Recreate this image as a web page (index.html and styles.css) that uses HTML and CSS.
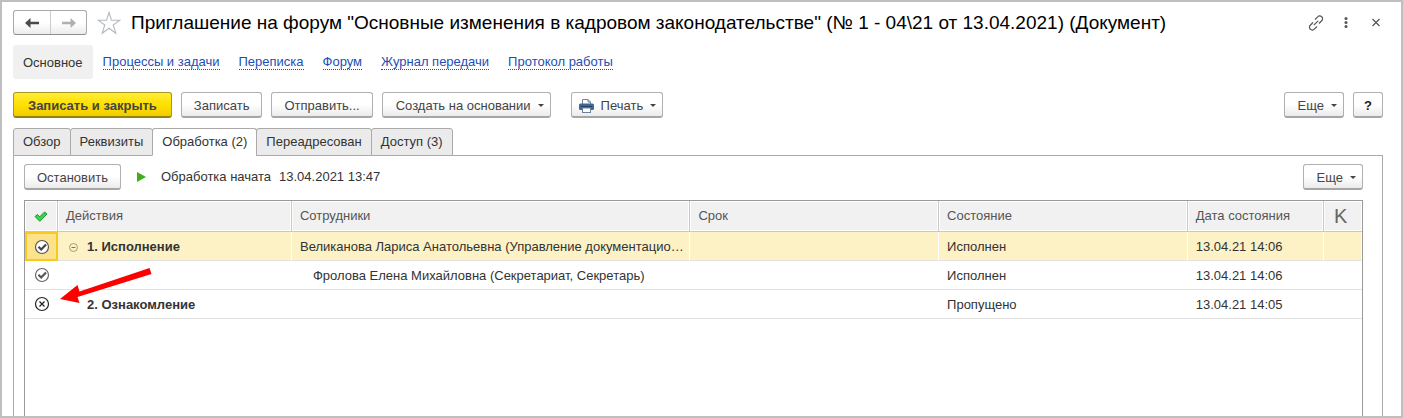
FILE: index.html
```html
<!DOCTYPE html>
<html lang="ru">
<head>
<meta charset="utf-8">
<title>Приглашение на форум (Документ)</title>
<link rel="stylesheet" href="styles.css">
</head>
<body>
<main class="window">
  <header class="titlebar">
    <div class="history">
      <button type="button" class="history-btn" aria-label="Назад"><svg width="14" height="10" viewBox="0 0 14 10"><path d="M0 5 5.500 0V3.700H14V6.300H5.500V10Z" fill="#4a4a4a"/></svg></button>
      <button type="button" class="history-btn" aria-label="Вперед"><svg width="14" height="10" viewBox="0 0 14 10"><path d="M14 5 8.500 0V3.700H0V6.300H8.500V10Z" fill="#b0b0b0"/></svg></button>
    </div>
    <button type="button" class="icon-btn star" aria-label="В избранное"><svg width="24" height="24" viewBox="0 0 24 24"><path d="M12 1.500 14.500 9.300H22.800L16.200 14 18.800 22.200 12 17.200 5.200 22.200 7.800 14 1.200 9.300H9.500Z" fill="#fff" stroke="#b4b8be" stroke-width="1.100"/></svg></button>
    <h1 class="title">Приглашение на форум "Основные изменения в кадровом законодательстве" (№ 1 - 04\21 от 13.04.2021) (Документ)</h1>
    <div class="window-tools">
      <button type="button" class="icon-btn" aria-label="Ссылка"><svg width="18" height="18" viewBox="0 0 18 18" fill="none" stroke="#555" stroke-width="1.200"><path d="M8 5.500 10.700 2.800a2.700 2.700 0 0 1 4 0 2.700 2.700 0 0 1 0 4L12 9.500M10 12.500 7.300 15.200a2.700 2.700 0 0 1-4 0 2.700 2.700 0 0 1 0-4L6 8.500M6.800 11.200 11.200 6.800"/></svg></button>
      <button type="button" class="icon-btn" aria-label="Меню"><svg width="18" height="18" viewBox="0 0 18 18" fill="#555"><circle cx="9" cy="4.500" r="1.500"/><circle cx="9" cy="8.500" r="1.500"/><circle cx="9" cy="12.500" r="1.500"/></svg></button>
      <button type="button" class="icon-btn" aria-label="Закрыть"><svg width="18" height="18" viewBox="0 0 18 18"><path d="M5.500 5 12.500 12M12.500 5 5.500 12" stroke="#555" stroke-width="1.200"/></svg></button>
    </div>
  </header>

  <nav class="sections">
    <span class="section-current">Основное</span>
    <a class="section-link" href="#">Процессы и задачи</a>
    <a class="section-link" href="#">Переписка</a>
    <a class="section-link" href="#">Форум</a>
    <a class="section-link" href="#">Журнал передачи</a>
    <a class="section-link" href="#">Протокол работы</a>
  </nav>

  <div class="toolbar">
    <button type="button" class="btn btn-primary">Записать и закрыть</button>
    <button type="button" class="btn">Записать</button>
    <button type="button" class="btn">Отправить...</button>
    <button type="button" class="btn btn-menu">Создать на основании<span class="caret"></span></button>
    <button type="button" class="btn btn-menu btn-print"><svg width="15" height="14" viewBox="0 0 15 14"><path d="M3.500 5V.5H9L11.500 3V5" fill="#fff" stroke="#6d8299"/><path d="M9 .5V3H11.500" fill="none" stroke="#6d8299"/><rect y="4.500" width="15" height="6.500" rx="1.500" fill="#3d6894"/><path d="M2 7.500H13" stroke="#1f4166"/><rect x="3.500" y="9" width="8" height="4.500" fill="#fff" stroke="#6d8299"/></svg>Печать<span class="caret"></span></button>
    <span class="spacer"></span>
    <button type="button" class="btn btn-menu">Еще<span class="caret"></span></button>
    <button type="button" class="btn btn-help">?</button>
  </div>

  <div class="tabs" role="tablist">
    <button type="button" class="tab" role="tab">Обзор</button>
    <button type="button" class="tab" role="tab">Реквизиты</button>
    <button type="button" class="tab tab-active" role="tab" aria-selected="true">Обработка (2)</button>
    <button type="button" class="tab" role="tab">Переадресован</button>
    <button type="button" class="tab" role="tab">Доступ (3)</button>
  </div>

  <section class="panel">
    <div class="panel-bar">
      <button type="button" class="btn">Остановить</button>
      <svg class="play" width="9" height="10" viewBox="0 0 9 10"><path d="M0 0 9 5 0 10Z" fill="#3fae1c"/></svg>
      <span>Обработка начата</span>
      <time class="started">13.04.2021 13:47</time>
      <span class="spacer"></span>
      <button type="button" class="btn btn-menu">Еще<span class="caret"></span></button>
    </div>
    <div class="grid-box">
      <table class="grid">
        <colgroup><col class="col-mark"><col class="col-action"><col class="col-staff"><col class="col-mid"><col class="col-mid"><col><col class="col-k"></colgroup>
        <thead>
          <tr>
            <th class="mark" aria-label="Отметка"><svg width="14" height="11" viewBox="0 0 14 11"><path d="M1 5.500 3.500 3.500 5.800 5.800 10.500 1 13 3 5.800 10.300Z" fill="#3fd04c" stroke="#169a2b"/></svg></th>
            <th>Действия</th><th>Сотрудники</th><th>Срок</th><th>Состояние</th><th>Дата состояния</th><th class="control">K</th>
          </tr>
        </thead>
        <tbody>
          <tr class="selected">
            <td class="mark mark-focus"><svg width="16" height="16" viewBox="0 0 16 16"><circle cx="8" cy="8" r="6.500" fill="#fff" stroke="#555" stroke-width="1.200"/><path d="M4.500 7.800 7.200 10.500 12 5.500" fill="none" stroke="#444" stroke-width="2.200"/></svg></td>
            <td class="action"><span class="step"><svg width="9" height="9" viewBox="0 0 9 9"><circle cx="4.500" cy="4.500" r="4" fill="none" stroke="#a39a78"/><path d="M2.500 4.500H6.500" stroke="#7d7658"/></svg>1. Исполнение</span></td>
            <td>Великанова Лариса Анатольевна (Управление документацио…</td><td></td><td>Исполнен</td><td>13.04.21 14:06</td><td></td>
          </tr>
          <tr>
            <td class="mark"><svg width="16" height="16" viewBox="0 0 16 16"><circle cx="8" cy="8" r="6.500" fill="#fff" stroke="#666" stroke-width="1.200"/><path d="M4.500 7.800 7.200 10.500 12 5.500" fill="none" stroke="#555" stroke-width="2.200"/></svg></td>
            <td></td><td class="nested">Фролова Елена Михайловна (Секретариат, Секретарь)</td><td></td><td>Исполнен</td><td>13.04.21 14:06</td><td></td>
          </tr>
          <tr>
            <td class="mark"><svg width="16" height="16" viewBox="0 0 16 16" fill="none" stroke="#222"><circle cx="8" cy="8" r="6.500" stroke-width="1.200"/><path d="M5.500 5.500 10.500 10.500M10.500 5.500 5.500 10.500" stroke-width="1.300"/></svg></td>
            <td class="action action-leaf">2. Ознакомление</td><td></td><td></td><td>Пропущено</td><td>13.04.21 14:05</td><td></td>
          </tr>
        </tbody>
      </table>
      <svg class="pointer" width="92" height="36" viewBox="0 0 92 36"><path d="M0 32 17.500 18 19.500 24.500 89.500 1 91.500 7 17.500 30 19.500 36Z" fill="#fe0000"/></svg>
    </div>
  </section>
</main>
</body>
</html>
```
FILE: styles.css
```css
* {
  box-sizing: border-box;
}

body {
  margin: 0;
  font: 13px/16px "Liberation Sans", Arial, sans-serif;
  color: #333;
  background: #fff;
}

button {
  font: inherit;
  color: inherit;
}

svg {
  display: block;
  flex: none;
}

.window {
  display: flex;
  flex-direction: column;
  min-height: 100vh;
  border: 2px solid #bfbfbf;
  padding: 8px 18px 0 11px;
}

.titlebar {
  display: flex;
  align-items: center;
  height: 25px;
}

.history {
  display: flex;
  height: 25px;
  border: 1px solid #aaa;
  border-bottom-color: #8e8e8e;
  border-radius: 3px;
  background: linear-gradient(#fff 50%, #ececec);
}

.history-btn {
  display: grid;
  place-items: center;
  width: 36px;
  padding: 0;
  border: 0;
  background: none;
}

.history-btn + .history-btn {
  border-left: 1px solid #ccc;
}

.icon-btn {
  padding: 0;
  border: 0;
  background: none;
}

.star {
  margin: 0 10px;
}

.title {
  flex: 1;
  margin: 0;
  font-size: 19px;
  line-height: 24px;
  font-weight: 400;
  color: #000;
  white-space: nowrap;
}

.window-tools {
  display: flex;
  gap: 12px;
  margin-right: -2px;
}

.sections {
  display: flex;
  align-items: center;
  gap: 19px;
  margin-top: 10px;
}

.section-current {
  margin-right: -9px;
  padding: 10px 10px 8px;
  border-radius: 3px;
  background: #f0f0f0;
}

.section-link {
  line-height: 14px;
  color: #1c4fb5;
  text-decoration: none;
  border-bottom: 1px dotted #1c4fb5;
}

.toolbar {
  display: flex;
  gap: 9px;
  margin-top: 13px;
}

.spacer {
  flex: 1;
}

.btn {
  display: flex;
  align-items: center;
  justify-content: center;
  height: 26px;
  padding: 2px 12px 0;
  border: 1px solid #b0b0b0;
  border-bottom: 2px solid #a6a6a6;
  border-radius: 3px;
  background: linear-gradient(#fff 50%, #ebebeb);
  color: #444;
  white-space: nowrap;
}

.btn-primary {
  padding: 2px 14px 0;
  border-color: #a89a20;
  border-bottom-color: #95840a;
  background: linear-gradient(#ffec3a, #ffe000 50%, #f0cd00);
  font-weight: 700;
}

.btn-menu {
  gap: 7px;
  padding-left: 13px;
  padding-right: 6px;
}

.btn-print {
  margin-left: 11px;
  padding-left: 7px;
}

.caret {
  border: 3px solid transparent;
  border-top-color: #444;
  border-bottom: 0;
}

.btn-help {
  width: 30px;
  padding: 2px 0 0;
  font-weight: 700;
  color: #222;
}

.tabs {
  position: relative;
  z-index: 1;
  display: flex;
  margin-top: 10px;
}

.tab {
  height: 28px;
  margin-right: -1px;
  padding: 0 9px;
  border: 1px solid #aaa;
  border-radius: 3px 3px 0 0;
  background: #ebebeb;
}

.tab-active {
  border-bottom-color: #fff;
  background: #fff;
}

.panel {
  display: flex;
  flex: 1;
  flex-direction: column;
  margin-top: -1px;
  padding: 8px 19px 0 10px;
  border: 1px solid #aaa;
  border-bottom: 0;
}

.panel-bar {
  display: flex;
  align-items: center;
}

.play {
  margin: 0 15px 0 16px;
}

.started {
  margin-left: 8px;
}

.grid-box {
  position: relative;
  flex: 1;
  margin-top: 10px;
  border: 1px solid #999;
  border-bottom: 0;
}

.grid {
  width: 100%;
  table-layout: fixed;
  border-collapse: separate;
  border-spacing: 0;
}

.col-mark {
  width: 33px;
}

.col-action {
  width: 17.5%;
}

.col-staff {
  width: 29.8%;
}

.col-mid {
  width: 18.6%;
}

.col-k {
  width: 38px;
}

.grid th,
.grid td {
  height: 29px;
  padding: 2px 2px 0 8px;
  overflow: hidden;
  text-align: left;
  text-overflow: ellipsis;
  white-space: nowrap;
  border-bottom: 1px solid #e2e2e2;
}

.grid th {
  height: 31px;
  padding-top: 0;
  font-weight: 400;
  color: #555;
  background: #f1f1f1;
  border-right: 1px solid #c8c8c8;
  border-bottom-color: #c8c8c8;
  box-shadow: inset 0 0 0 1px #fff;
}

.grid th:last-child {
  border-right: 0;
}

.grid .mark {
  padding: 0;
}

.mark svg {
  margin: 0 auto;
}

.grid .control {
  padding-left: 10px;
  font-size: 20px;
  color: #666;
}

.selected td {
  background: #fdf1c6;
  border-right: 1px solid #fff;
}

.grid .mark-focus {
  background: #fde28c;
  border: 2px solid #f8ca20;
}

.grid .action {
  font-weight: 700;
}

.step {
  display: flex;
  align-items: center;
  gap: 9px;
  margin-left: 3px;
}

.grid .action-leaf {
  padding-left: 29px;
}

.grid .nested {
  padding-left: 21px;
}

.pointer {
  position: absolute;
  top: 66px;
  left: 35px;
}
```
